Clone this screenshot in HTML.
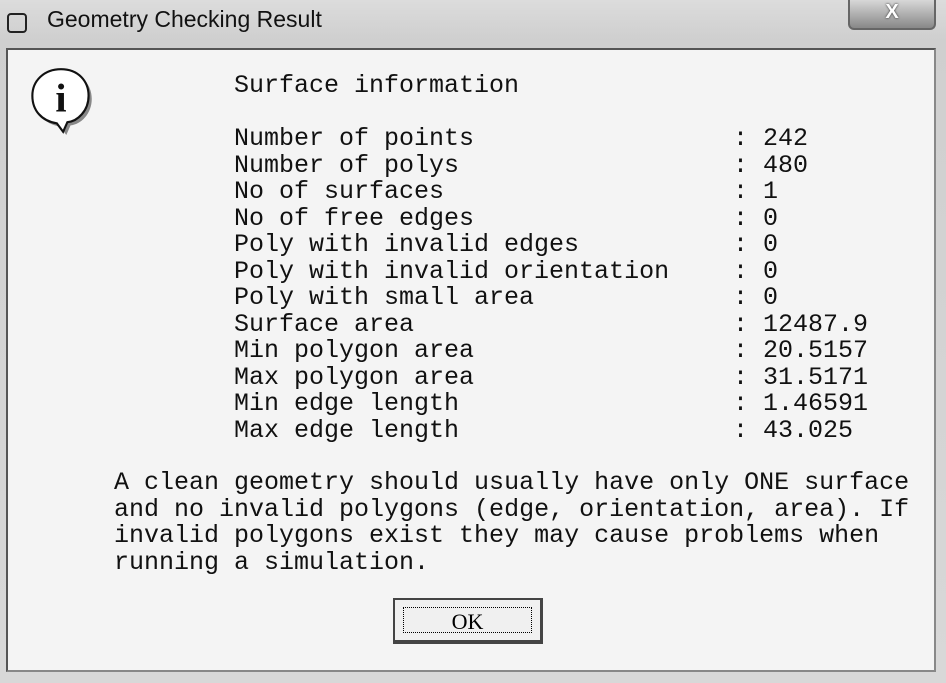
<!DOCTYPE html>
<html><head><meta charset="utf-8"><style>
html,body{margin:0;padding:0;}
body{width:946px;height:683px;position:relative;overflow:hidden;background:linear-gradient(#dcdcdc,#cfcfcf 40px,#d8d8d8);font-family:"Liberation Sans",sans-serif;}
.title{position:absolute;left:47px;top:6px;font-size:23px;color:#111;}
.sysicon{position:absolute;left:7px;top:13px;width:16px;height:16px;border:2px solid #222;border-radius:4px;}
.close{position:absolute;left:848px;top:-2px;width:84px;height:30px;border:2px solid #666;border-top:none;border-radius:0 0 6px 6px;background:linear-gradient(#ddd,#888);text-align:center;color:#fff;font-weight:bold;font-size:20px;line-height:28px;text-shadow:0 0 2px #222;}
.panel{position:absolute;left:6px;top:48px;width:926px;height:620px;background:#f4f4f4;border:2px solid #555;border-right-color:#888;border-bottom-color:#888;}
.m{position:absolute;font-family:"Liberation Mono",monospace;font-size:25px;color:#111;white-space:pre;line-height:26.5px;}
.ok{position:absolute;left:393px;top:598px;width:150px;height:46px;background:#f0f0f0;border:2px solid #444;border-right-width:3px;border-bottom-width:4px;box-sizing:border-box;}
.ok div{position:absolute;left:8px;top:7px;right:8px;bottom:7px;border:1px dotted #000;text-align:center;font-family:"Liberation Serif",serif;font-size:22px;line-height:28px;}
</style></head><body>
<div class="sysicon"></div>
<div class="title">Geometry Checking Result</div>
<div class="close">X</div>
<div class="panel"></div>
<svg style="position:absolute;left:26px;top:66px" width="70" height="70" viewBox="0 0 64 66">
<path d="M32 3 C48 3 58 14 58 28 C58 42 48 52 38 53 L34 62 L28 54 C14 52 5 42 5 28 C5 14 16 3 32 3 Z" fill="#888" transform="translate(3,3)"/>
<path d="M32 3 C48 3 58 14 58 28 C58 42 48 52 38 53 L34 62 L28 54 C14 52 5 42 5 28 C5 14 16 3 32 3 Z" fill="#fff" stroke="#111" stroke-width="2"/>
<text x="32" y="43" text-anchor="middle" font-family="Liberation Serif,serif" font-weight="bold" font-size="38" fill="#111">i</text>
</svg>
<div class="m" style="left:234px;top:73px">Surface information</div>
<div class="m" style="left:234px;top:126px">Number of points
Number of polys
No of surfaces
No of free edges
Poly with invalid edges
Poly with invalid orientation
Poly with small area
Surface area
Min polygon area
Max polygon area
Min edge length
Max edge length</div>
<div class="m" style="left:733px;top:126px">: 242
: 480
: 1
: 0
: 0
: 0
: 0
: 12487.9
: 20.5157
: 31.5171
: 1.46591
: 43.025</div>
<div class="m" style="left:114px;top:470px">A clean geometry should usually have only ONE surface
and no invalid polygons (edge, orientation, area). If
invalid polygons exist they may cause problems when
running a simulation.</div>
<div class="ok"><div>OK</div></div>
</body></html>
